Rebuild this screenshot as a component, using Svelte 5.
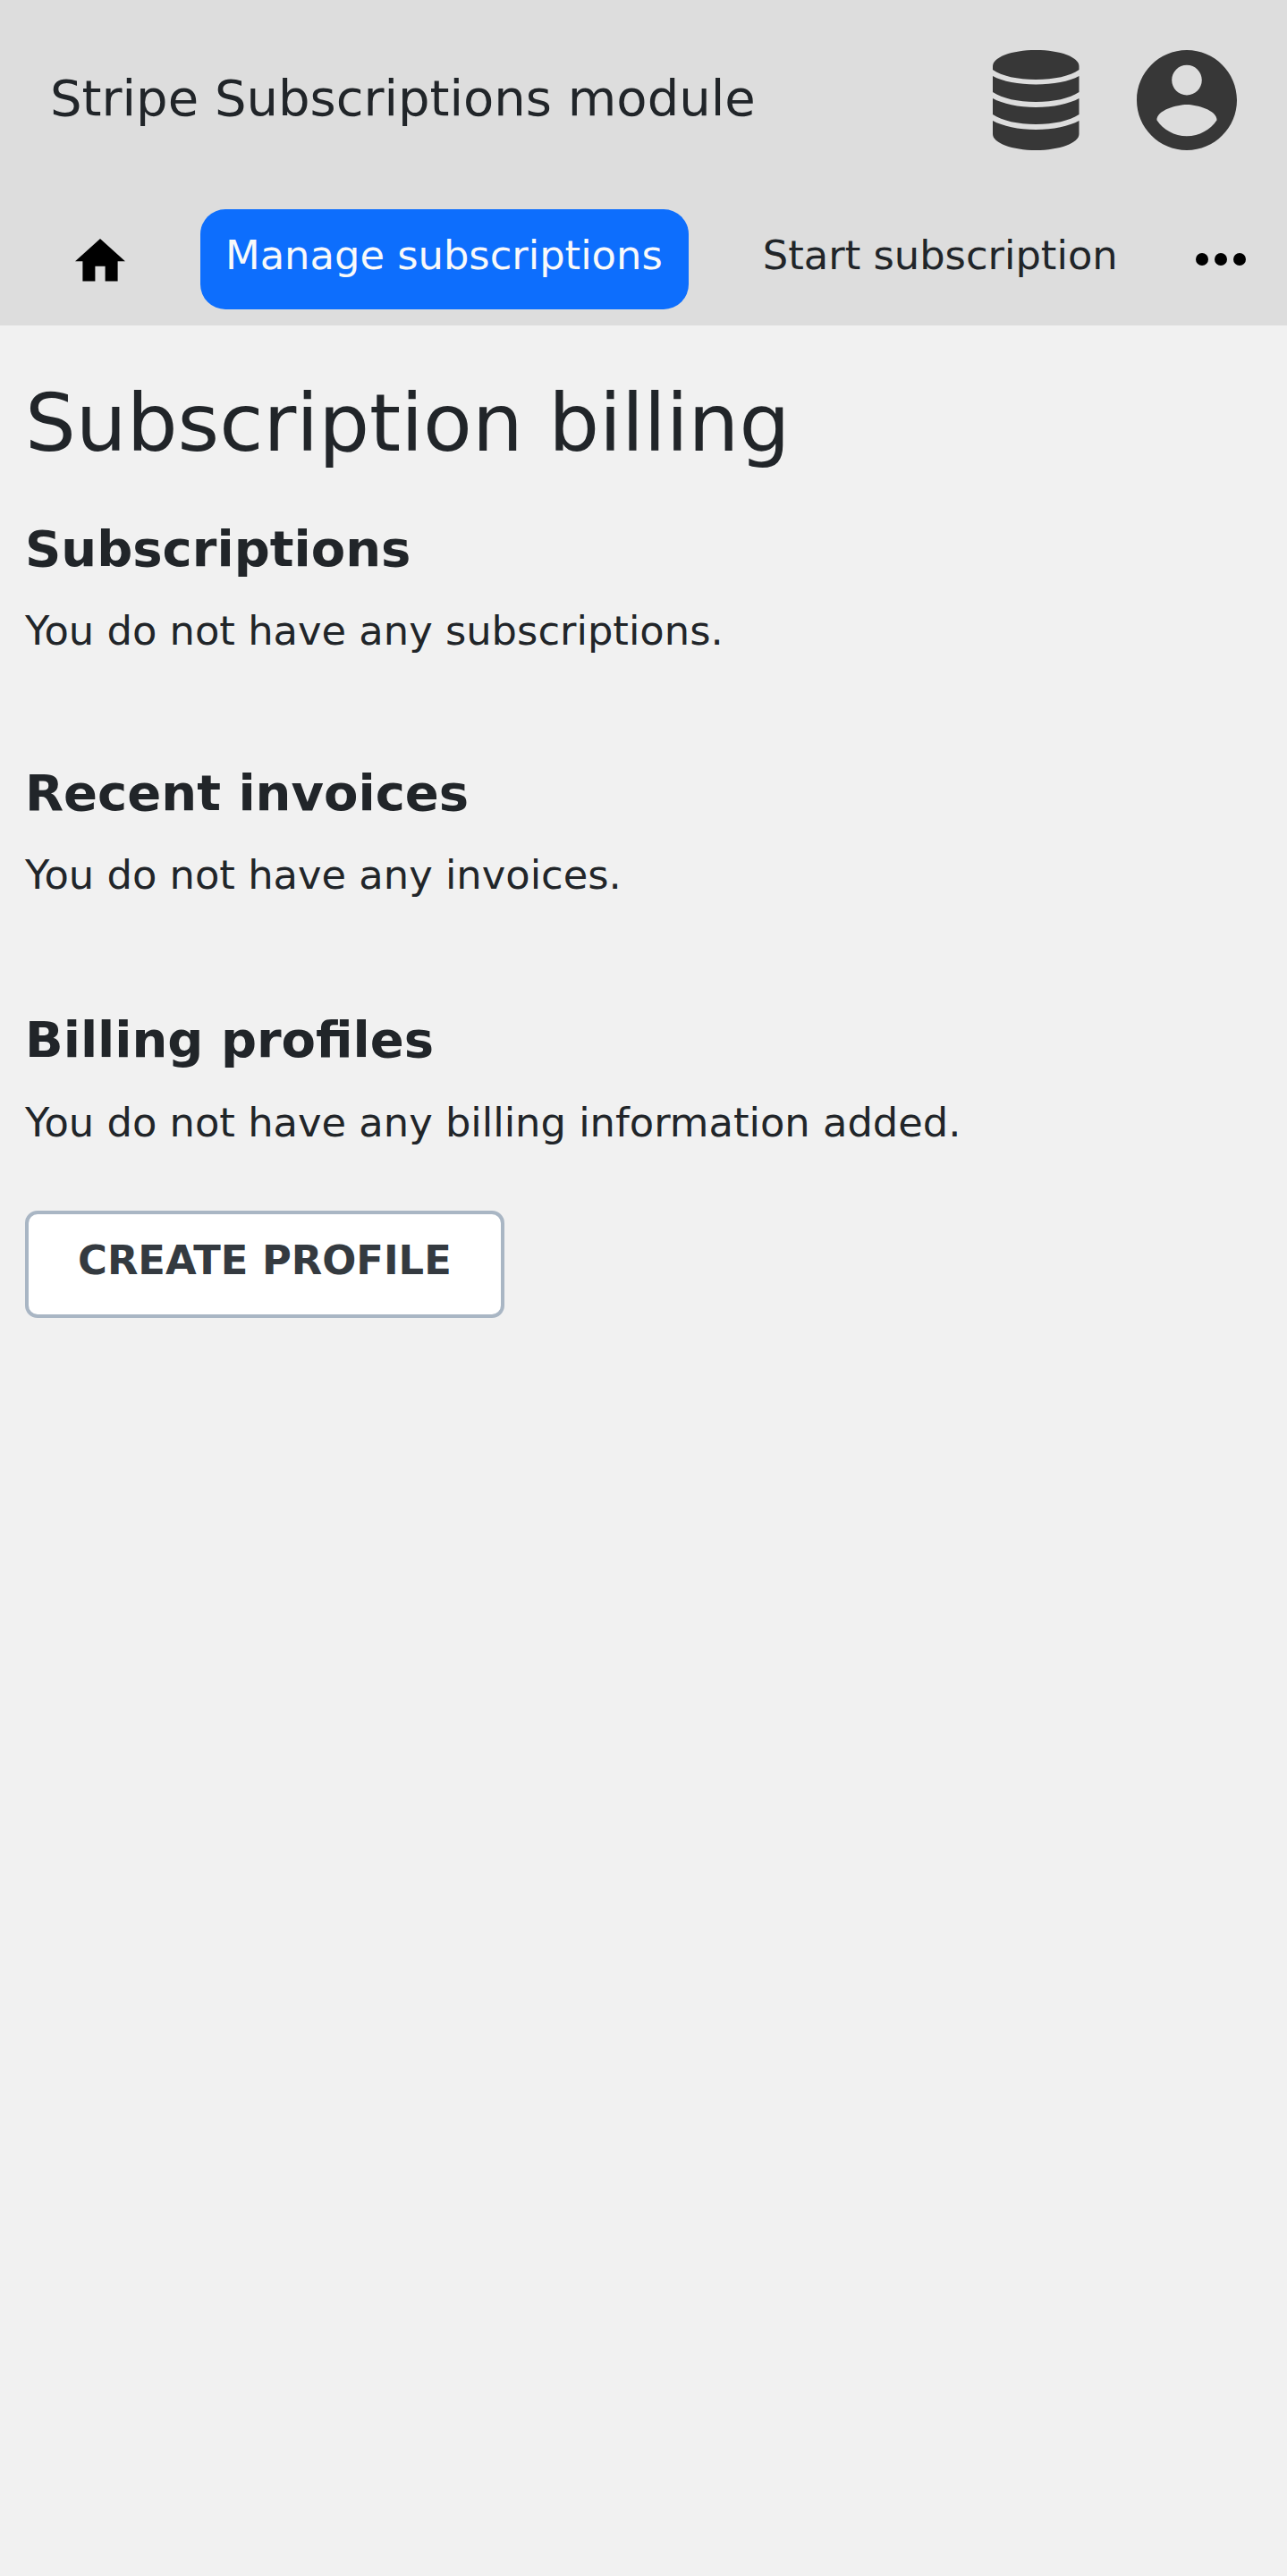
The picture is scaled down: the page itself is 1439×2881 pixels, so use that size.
<script>
  const tabs = [
    { label: 'Manage subscriptions', active: true },
    { label: 'Start subscription', active: false }
  ];
  const sections = [
    { title: 'Subscriptions', text: 'You do not have any subscriptions.' },
    { title: 'Recent invoices', text: 'You do not have any invoices.' },
    { title: 'Billing profiles', text: 'You do not have any billing information added.' }
  ];
</script>

<div class="page">
  <header>
    <div class="top">
      <span class="title">Stripe Subscriptions module</span>
      <svg class="database" viewBox="0 0 97 112" preserveAspectRatio="none" aria-hidden="true">
        <path d="M0 18C0 8 21 0 48.500 0S97 8 97 18V22C87 29 69 33 48.500 33S10 29 0 22Z" />
        <path d="M0 29C11 35 29 38.500 48.500 38.500S86 35 97 29V47C86 54 69 58 48.500 58S11 54 0 47Z" />
        <path d="M0 54C11 60 29 64 48.500 64S86 60 97 54V72C86 79 69 83 48.500 83S11 79 0 72Z" />
        <path d="M0 79C11 85 29 89 48.500 89S86 85 97 79V94C97 104 75 112 48.500 112S0 104 0 94Z" />
      </svg>
      <svg class="account" viewBox="2 2 20 20" aria-hidden="true">
        <path d="M12 2C6.480 2 2 6.480 2 12s4.480 10 10 10 10-4.480 10-10S17.520 2 12 2zm0 3c1.660 0 3 1.340 3 3s-1.340 3-3 3-3-1.340-3-3 1.340-3 3-3zm0 14.200c-2.500 0-4.710-1.280-6-3.220.030-1.990 4-3.080 6-3.080 1.990 0 5.970 1.090 6 3.080-1.290 1.940-3.500 3.220-6 3.220z" />
      </svg>
    </div>
    <nav>
      <svg class="home" viewBox="2 3 20 17" aria-hidden="true">
        <path d="M10 20v-6h4v6h5v-8h3L12 3 2 12h3v8z" />
      </svg>
      <div class="tabs">
        {#each tabs as tab}
          <span class="tab" class:active={tab.active}>{tab.label}</span>
        {/each}
      </div>
      <svg class="more" viewBox="4 10 16 4" aria-hidden="true">
        <circle cx="6" cy="12" r="2" />
        <circle cx="12" cy="12" r="2" />
        <circle cx="18" cy="12" r="2" />
      </svg>
    </nav>
  </header>

  <main>
    <h1>Subscription billing</h1>
    {#each sections as section}
      <section>
        <h2>{section.title}</h2>
        <p>{section.text}</p>
      </section>
    {/each}
    <button>CREATE PROFILE</button>
  </main>
</div>

<style>
  :global(body) {
    margin: 0;
    background: #f1f1f1;
  }
  .page {
    min-height: 2881px;
    background: #f1f1f1;
    color: #212529;
    font-family: 'DejaVu Sans', sans-serif;
    font-size: 44.8px;
  }
  header {
    height: 364px;
    background: #ddd;
  }
  .top {
    display: flex;
    align-items: flex-start;
    height: 168px;
    padding: 56px 56.5px 0 56px;
    fill: #373737;
  }
  .title {
    flex: 1;
    font-size: 56px;
    line-height: 107px;
  }
  .database {
    width: 96.5px;
    height: 112px;
    margin-right: 64px;
  }
  .account {
    width: 112px;
    height: 112px;
  }
  nav {
    display: flex;
    align-items: flex-start;
    padding: 10.4px 46px 0 84px;
  }
  .home {
    width: 56px;
    height: 47.6px;
    margin: 32.6px 84px 0 0;
  }
  .tabs {
    display: flex;
    flex: 1;
    gap: 55px;
  }
  .tab {
    height: 112px;
    padding: 0 28px;
    border-radius: 28px;
    line-height: 103px;
    white-space: nowrap;
  }
  .active {
    padding-right: 29px;
    background: #0d6efd;
    color: #f8f9fa;
  }
  .more {
    width: 56px;
    height: 14px;
    margin-top: 49px;
  }
  main {
    padding: 55px 28px 0;
  }
  h1 {
    margin: 0 0 53px;
    font-size: 89.6px;
    font-weight: 400;
    line-height: 108px;
  }
  section {
    margin-bottom: 114px;
  }
  section:nth-of-type(2) {
    margin-bottom: 117px;
  }
  section:nth-of-type(3) {
    margin-bottom: 65px;
  }
  h2 {
    margin: 0 0 25px;
    font-size: 56px;
    font-weight: 700;
    line-height: 67px;
  }
  section:nth-of-type(3) h2 {
    margin-bottom: 26px;
  }
  p {
    margin: 0;
    line-height: 67px;
  }
  button {
    display: block;
    height: 120px;
    padding: 0 55px 8px;
    border: 4px solid #a9b6c4;
    border-radius: 14px;
    background: #fff;
    color: #343a40;
    font: 700 44.8px / 104px 'DejaVu Sans', sans-serif;
  }
</style>
